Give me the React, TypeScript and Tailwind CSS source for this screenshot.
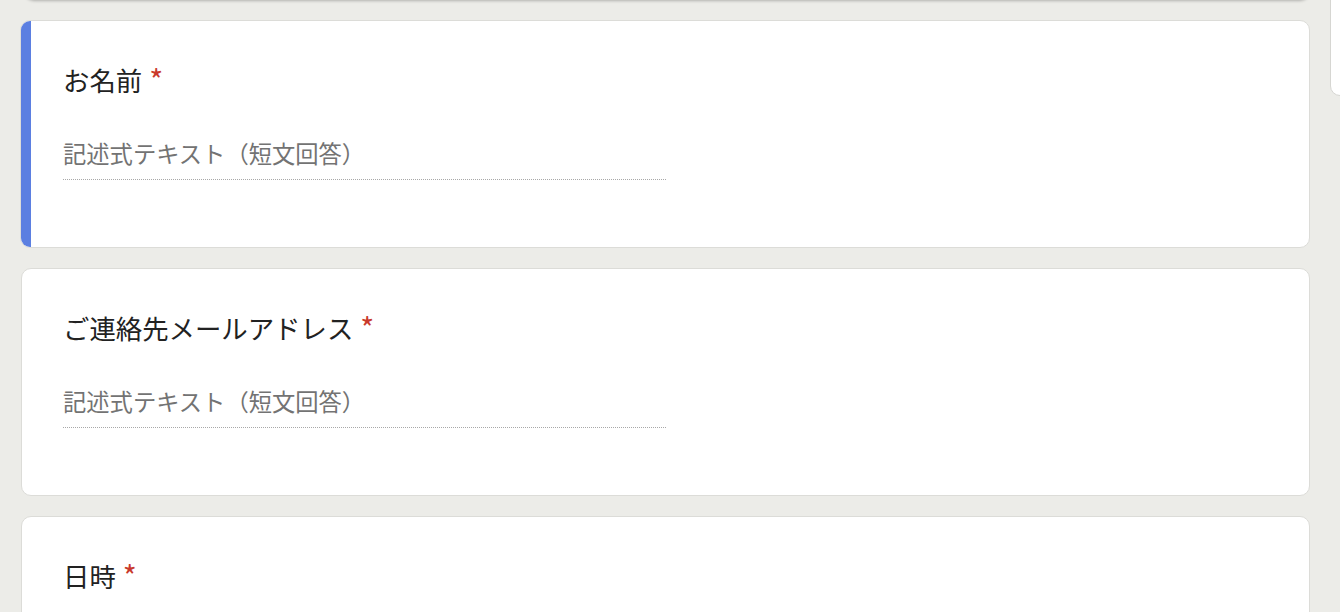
import React from "react";

const font = { fontFamily: '"Noto Sans CJK JP", "Noto Sans", sans-serif' };

function Question({ title, active, placeholder = true }: { title: string; active?: boolean; placeholder?: boolean }) {
  return (
    <div className={`relative bg-white rounded-[10px] border border-[#dcdcd8] overflow-hidden h-[228px] shrink-0 ${active ? "-ml-[1px]" : ""}`}>
      {active && <div className="absolute left-0 top-0 bottom-0 w-[10px] bg-[#5b7fe1]" />}
      <div className={`${active ? "pl-[42px]" : "pl-[41px]"} pt-[41px]`}>
        <div className="flex items-start h-[36px] leading-[36px] text-[26.4px] text-[#222222]">
          <span>{title}</span>
          <span className="ml-[7px] text-[#c9392c] text-[30px] leading-[34px]">*</span>
        </div>
        {placeholder && (
          <div className="mt-[39px] w-[603px] border-b border-dotted border-[#a8a8a8] pb-[10px]">
            <div className="h-[32px] leading-[32px] text-[23.3px] text-[#737373]">記述式テキスト（短文回答）</div>
          </div>
        )}
      </div>
    </div>
  );
}

export default function App() {
  return (
    <div className="relative w-[1340px] h-[612px] overflow-hidden bg-[#ececE8]" style={font}>
      <div className="pl-[21px] w-[1310px] flex flex-col gap-[20px]">
        <div className="-mt-[20px] h-[20px] bg-white rounded-b-[10px] border-b-[3px] border-[#8e8e8e] ml-[3px] -mb-[20px] shadow-[0_1px_3px_rgba(0,0,0,0.25)]" />
        <div className="mt-[20px]">
          <Question title="お名前" active />
        </div>
        <Question title="ご連絡先メールアドレス" />
        <Question title="日時" />
      </div>
      <div className="absolute left-[1330px] -top-[10px] w-[40px] h-[106px] bg-white border border-[#d6d6d2] rounded-[10px]" />
    </div>
  );
}
